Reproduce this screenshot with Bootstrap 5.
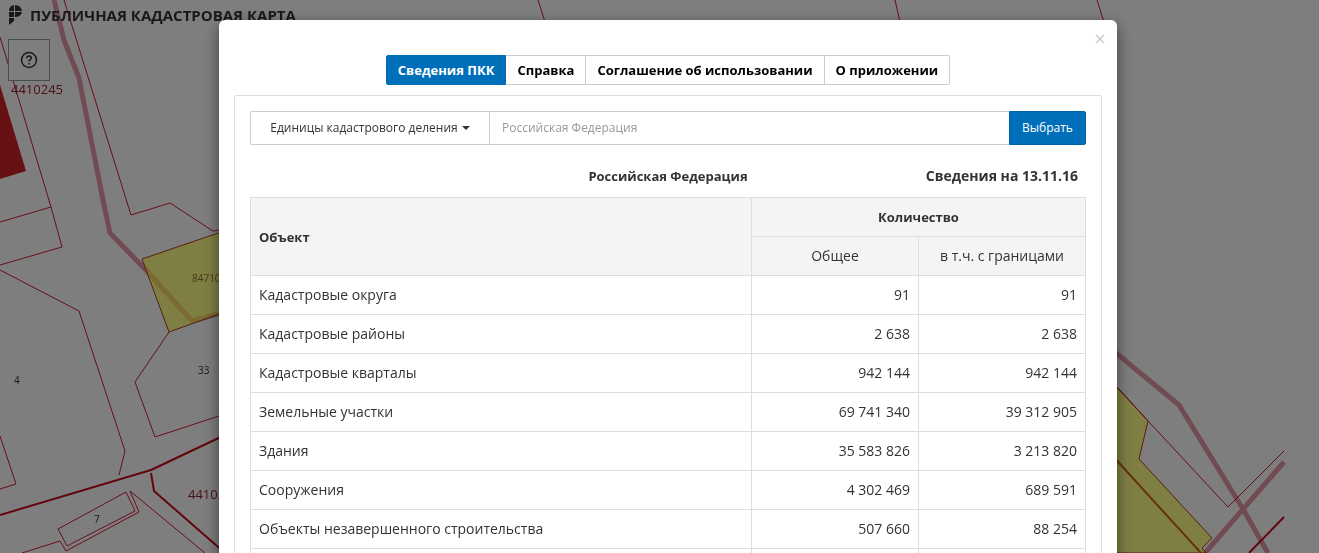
<!DOCTYPE html>
<html lang="ru">
<head>
<meta charset="utf-8">
<meta name="viewport" content="width=device-width, initial-scale=1">
<title>Публичная кадастровая карта</title>
<link href="https://cdn.jsdelivr.net/npm/bootstrap@5.3.0/dist/css/bootstrap.min.css" rel="stylesheet">
<style>
  body { font-family: "Open Sans", "Noto Sans", sans-serif; font-size: 14px; line-height: 22px; color: #333; background: #fffdfd; overflow: hidden; }
  .map-view { z-index: 0; }
  .map-view text { font-family: "Open Sans", "Noto Sans", sans-serif; }
  .page-head { padding: 5px 8px; }
  .brand-title { font-size: 15px; line-height: 20px; color: #333; }
  .help-btn { width: 42px; height: 42px; margin-top: 14px; background: #fffdfd; border: 1px solid #999; color: #333; }
  .info-modal { padding-left: 17px; scrollbar-width: none; }
  .info-modal::-webkit-scrollbar { display: none; }
  .info-dialog { max-width: 898px; margin-top: 20px; }
  .info-content { border: 0; border-radius: 6px; color: #333; box-shadow: 0 5px 15px rgba(0,0,0,.5); padding: 35px 15px 20px; }
  .close-btn { position: absolute; top: 12px; right: 11px; width: 12px; height: 14px; color: #ccc; line-height: 0; }
  .tabs-row .btn { --bs-btn-font-size: 13px; --bs-btn-line-height: 20px; --bs-btn-padding-x: 11px; --bs-btn-padding-y: 4px; --bs-btn-color: #000; --bs-btn-border-color: #ccc; --bs-btn-border-radius: 2px; --bs-btn-active-color: #fff; --bs-btn-active-bg: #006fb9; --bs-btn-active-border-color: #006fb9; --bs-btn-font-weight: 700; }
  .panel-box { border: 1px solid #ddd; border-radius: 2px; margin-top: 10px; padding: 15px 15px 20px; }
  .search-row .btn, .search-row .form-control { font-size: 12px; line-height: 20px; padding: 6px 12px; border-color: #ccc; border-radius: 2px; }
  .search-row .unit-btn { color: #333; width: 240px; }
  .search-row .unit-btn::after { border-width: 4px 4px 0; vertical-align: 2px; margin-left: 4px; }
  .search-row .form-control::placeholder { color: #999; }
  .search-row .pick-btn { background: #006fb9; border-color: #0065a8; color: #fff; width: 77px; }
  .caption-row { padding: 20px 8px 10px; }
  .region-name { font-size: 13px; }
  .stat-table { --bs-table-color: #333; border-color: #ddd; table-layout: fixed; }
  .stat-table > :not(caption) > * > * { padding: 8px; }
  .stat-table thead { --bs-table-bg: #f5f4f5; vertical-align: middle; }
  .stat-table .head-main { font-size: 13px; }
  .col-num { width: 20%; }
</style>
</head>
<body>
<svg class="map-view position-fixed top-0 start-0 w-100 h-100" viewBox="0 0 1319 553" preserveAspectRatio="xMinYMin slice" fill="none" stroke-linejoin="round" aria-hidden="true">
  <path d="M0 85 26 171 0 179z" fill="#cc2428"/>
  <g stroke="#c8324b" stroke-opacity=".5" stroke-width="5">
    <path d="M54 0 64 40 79 78 103 200 110 233 146 270 192 321 225 312"/>
    <path d="M1110 348 1179 405 1243 509 1268 553M1205 553 1284 462"/>
  </g>
  <g fill="#ffff3c" fill-opacity=".6" stroke="#b43a1c">
    <path d="M142 259 230 229V310L169 332z"/>
    <path d="M1110 382 1120 390 1148 421 1139 459 1212 538 1202 548 1206 553H1110z"/>
  </g>
  <g stroke="#cc1c34" stroke-width="1">
    <path d="M0 37 51 207 62 247 0 265M51 207 0 222"/>
    <path d="M64 0 131 215 170 203 213 231 225 229"/>
    <path d="M0 270 79 311 125 451 119 475"/>
    <path d="M169 332 135 382 155 437 225 414"/>
    <path d="M0 436 16 484 0 489"/>
    <path d="M126 492 58 529 67 546 135 511zM205 553 130 491 139 512 66 551 60 541 22 553"/>
    <path d="M538 0 545 22M895 0 900 22M1097 0 1104 22"/>
    <path d="M1110 380 1228 507 1284 451"/>
  </g>
  <g stroke="#c40a1c" stroke-width="2">
    <path d="M0 515 151 470 225 435M151 473 154 491 225 553"/>
    <path d="M1249 553 1284 517"/>
    <path d="M1110 453 1201 553" stroke="#c86410"/>
  </g>
  <g fill="#981c30" font-size="13">
    <text x="11" y="94">4410245</text>
    <text x="188" y="499">4410245</text>
  </g>
  <g fill="#333" font-size="10">
    <text x="14" y="384">4</text>
    <text x="198" y="374">33</text>
    <text x="94" y="523">7</text>
    <text x="192" y="282" fill="#8a7430">84710</text>
  </g>
</svg>

<header class="page-head position-relative">
  <div class="d-flex align-items-center gap-2">
    <svg width="14" height="20" viewBox="0 0 14 20" fill="#333" aria-hidden="true"><path d="M6 0V6H1Q1 1 6 0zM7 0Q13 0 14 6H7zM1 7H6V12H1zM7 7H14Q13 12 7 12zM1 13H6V16L1 20z"/></svg>
    <h1 class="brand-title fw-bold mb-0">ПУБЛИЧНАЯ КАДАСТРОВАЯ КАРТА</h1>
  </div>
  <button type="button" class="help-btn d-flex align-items-center justify-content-center p-0" aria-label="Помощь">
    <svg width="18" height="18" viewBox="0 0 18 18" fill="none" stroke="currentColor" stroke-width="1.5"><circle cx="9" cy="9" r="7.5"/><path d="M6.7 7.2Q6.8 5 9 5T11.3 7Q11.3 8 10 8.8 9 9.4 9 10.6M9 12v1.5"/></svg>
  </button>
</header>

<div class="modal-backdrop show"></div>
<div class="modal show d-block info-modal" tabindex="-1" role="dialog" aria-label="Сведения ПКК">
  <div class="modal-dialog info-dialog">
    <div class="modal-content info-content">
      <button type="button" class="close-btn btn p-0 border-0" aria-label="Закрыть"><svg width="10" height="10" viewBox="0 0 10 10" fill="none" stroke="currentColor" stroke-width="1.5"><path d="M1 1 9 9M9 1 1 9"/></svg></button>
      <div class="tabs-row d-flex justify-content-center">
        <div class="btn-group">
          <button type="button" class="btn active">Сведения ПКК</button>
          <button type="button" class="btn">Справка</button>
          <button type="button" class="btn">Соглашение об использовании</button>
          <button type="button" class="btn">О приложении</button>
        </div>
      </div>
      <section class="panel-box">
        <div class="input-group search-row">
          <button type="button" class="btn unit-btn dropdown-toggle">Единицы кадастрового деления</button>
          <input type="text" class="form-control" placeholder="Российская Федерация" aria-label="Территория">
          <button type="button" class="btn pick-btn">Выбрать</button>
        </div>
        <div class="caption-row position-relative d-flex justify-content-end fw-bold">
          <div class="region-name position-absolute start-0 end-0 text-center">Российская Федерация</div>
          <div>Сведения на 13.11.16</div>
        </div>
        <table class="table table-bordered stat-table mb-0">
          <colgroup><col><col class="col-num"><col class="col-num"></colgroup>
          <thead>
            <tr><th rowspan="2" class="head-main align-middle">Объект</th><th colspan="2" class="head-main text-center">Количество</th></tr>
            <tr><th class="text-center fw-normal">Общее</th><th class="text-center fw-normal">в т.ч. с границами</th></tr>
          </thead>
          <tbody>
            <tr><td>Кадастровые округа</td><td class="text-end">91</td><td class="text-end">91</td></tr>
            <tr><td>Кадастровые районы</td><td class="text-end">2 638</td><td class="text-end">2 638</td></tr>
            <tr><td>Кадастровые кварталы</td><td class="text-end">942 144</td><td class="text-end">942 144</td></tr>
            <tr><td>Земельные участки</td><td class="text-end">69 741 340</td><td class="text-end">39 312 905</td></tr>
            <tr><td>Здания</td><td class="text-end">35 583 826</td><td class="text-end">3 213 820</td></tr>
            <tr><td>Сооружения</td><td class="text-end">4 302 469</td><td class="text-end">689 591</td></tr>
            <tr><td>Объекты незавершенного строительства</td><td class="text-end">507 660</td><td class="text-end">88 254</td></tr>
            <tr><td>&nbsp;</td><td></td><td></td></tr>
          </tbody>
        </table>
      </section>
    </div>
  </div>
</div>
<script src="https://cdn.jsdelivr.net/npm/bootstrap@5.3.0/dist/js/bootstrap.bundle.min.js"></script>
</body>
</html>
